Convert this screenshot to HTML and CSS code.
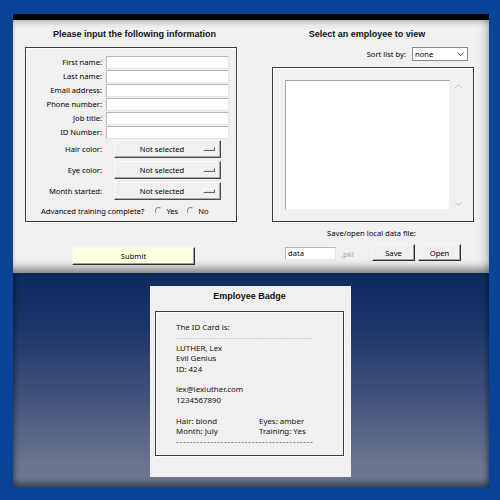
FILE: index.html
```html
<!DOCTYPE html>
<html>
<head>
<meta charset="utf-8">
<link rel="stylesheet" href="styles.css">
</head>
<body>
<div class="screen">
  <div class="titlebar"></div>
  <div class="app">
    <div class="col-left">
      <div class="heading heading-left">Please input the following information</div>
      <div class="groupbox form">
        <div class="grid">
          <label class="lbl">First name:</label><div class="entry"></div>
          <label class="lbl">Last name:</label><div class="entry"></div>
          <label class="lbl">Email address:</label><div class="entry"></div>
          <label class="lbl">Phone number:</label><div class="entry"></div>
          <label class="lbl">Job title:</label><div class="entry"></div>
          <label class="lbl">ID Number:</label><div class="entry"></div>
        </div>
        <div class="grid menus">
          <label class="lbl">Hair color:</label><div class="option"><span class="option-text">Not selected</span><span class="indicator"></span></div>
          <label class="lbl">Eye color:</label><div class="option"><span class="option-text">Not selected</span><span class="indicator"></span></div>
          <label class="lbl">Month started:</label><div class="option"><span class="option-text">Not selected</span><span class="indicator"></span></div>
        </div>
        <div class="radio-row">
          <span class="radio-label">Advanced training complete?</span>
          <span class="radio"><span class="dot"></span>Yes</span>
          <span class="radio"><span class="dot"></span>No</span>
        </div>
      </div>
      <div class="btn submit">Submit</div>
    </div>
    <div class="col-right">
      <div class="heading heading-right">Select an employee to view</div>
      <div class="sort-row">
        <span class="sort-label">Sort list by:</span>
        <div class="combo"><span>none</span>
          <svg class="chev" width="7" height="4" viewBox="0 0 7 4"><polyline points="0.5,0.5 3.5,3.5 6.5,0.5" fill="none" stroke="#555" stroke-width="1"/></svg>
        </div>
      </div>
      <div class="groupbox listframe">
        <div class="listbox"></div>
        <div class="scroll">
          <svg width="7" height="4" viewBox="0 0 7 4"><polyline points="0.5,3.5 3.5,0.5 6.5,3.5" fill="none" stroke="#bdbdbd" stroke-width="1"/></svg>
          <svg width="7" height="4" viewBox="0 0 7 4"><polyline points="0.5,0.5 3.5,3.5 6.5,0.5" fill="none" stroke="#bdbdbd" stroke-width="1"/></svg>
        </div>
      </div>
      <div class="save-label">Save/open local data file:</div>
      <div class="file-row">
        <div class="entry file-entry">data</div>
        <span class="ext">.pkl</span>
        <div class="btn gray save">Save</div>
        <div class="btn gray">Open</div>
      </div>
    </div>
  </div>
  <div class="desktop">
    <div class="badge">
      <div class="badge-title">Employee Badge</div>
      <div class="groupbox card">
        <div class="line">The ID Card is:</div>
        <div class="line dashes light">----------------------------------------</div>
        <div class="line">LUTHER, Lex</div>
        <div class="line">Evil Genius</div>
        <div class="line">ID: 424</div>
        <div class="line"></div>
        <div class="line">lex@lexluther.com</div>
        <div class="line">1234567890</div>
        <div class="line"></div>
        <div class="pair"><span>Hair: blond</span><span>Eyes: amber</span></div>
        <div class="pair"><span>Month: July</span><span>Training: Yes</span></div>
        <div class="line dashes">----------------------------------------</div>
      </div>
    </div>
  </div>
</div>
</body>
</html>
```
FILE: styles.css
```css
html, body {
  margin: 0;
  padding: 0;
}
body {
  width: 500px;
  height: 500px;
  background: #0a4499;
  font-family: "Noto Sans", "Liberation Sans", sans-serif;
  font-size: 7.6px;
  color: #000;
  overflow: hidden;
}
.screen {
  padding: 14px 11px 13px 13px;
  width: 476px;
}
.titlebar {
  height: 6px;
  background: #030303;
}
.app {
  height: 253px;
  background: #f0f0f0;
  box-shadow: inset 0 6px 6px -4px rgba(0,0,0,0.25),
              inset -9px 0 8px -6px rgba(0,0,0,0.22),
              inset 0 -10px 8px -5px rgba(0,0,0,0.45);
  display: flex;
  box-sizing: border-box;
}
.col-left {
  margin-left: 12px;
  width: 212px;
  display: flex;
  flex-direction: column;
}
.col-right {
  margin-left: 35px;
  width: 202px;
  display: flex;
  flex-direction: column;
}
.heading {
  font-family: "Liberation Sans", Arial, sans-serif;
  font-weight: bold;
  font-size: 9px;
  line-height: 14px;
  margin-top: 7px;
  color: #111;
  text-align: center;
  white-space: nowrap;
}
.heading-left {
  padding-left: 7px;
  margin-bottom: 6px;
}
.heading-right {
  padding-right: 12px;
}
.groupbox {
  border: 1px solid #3a3a3a;
  box-shadow: inset 1px 1px 0 #fcfcfc, 1px 1px 0 #fcfcfc;
}
.form {
  height: 175px;
  box-sizing: border-box;
  padding-top: 8px;
}
.grid {
  display: grid;
  grid-template-columns: 76px 123px;
  column-gap: 4px;
  row-gap: 1px;
}
.lbl {
  text-align: right;
  line-height: 13px;
  white-space: nowrap;
}
.entry {
  height: 13px;
  box-sizing: border-box;
  background: #fff;
  border: 1px solid;
  border-color: #b8b8b8 #e6e6e6 #e6e6e6 #b8b8b8;
}
.menus {
  margin-top: 1px;
  row-gap: 3px;
}
.menus .lbl {
  line-height: 18px;
}
.option {
  margin-left: 8px;
  width: 107px;
  height: 18px;
  box-sizing: border-box;
  border: 1px solid;
  border-color: #fafafa #4a4a4a #4a4a4a #fafafa;
  box-shadow: inset -1px -1px 0 #a8a8a8;
  display: flex;
  align-items: center;
}
.option-text {
  flex: 1;
  text-align: center;
  padding-left: 6px;
}
.indicator {
  width: 10px;
  height: 2px;
  margin-right: 5px;
  border: 1px solid;
  border-color: #fff #666 #666 #fff;
  background: #e4e4e4;
}
.radio-row {
  display: flex;
  align-items: center;
  height: 15px;
  margin-top: 3px;
  padding-left: 15px;
  white-space: nowrap;
}
.radio-label {
  margin-right: 11px;
}
.radio {
  display: flex;
  align-items: center;
  margin-right: 9px;
}
.dot {
  width: 5px;
  height: 5px;
  border-radius: 50%;
  border: 1px solid;
  border-color: #8a8a8a #f4f4f4 #f4f4f4 #8a8a8a;
  margin-right: 4px;
}
.btn {
  box-sizing: border-box;
  border: 1px solid;
  border-color: #f6f6f6 #2e2e2e #2e2e2e #f6f6f6;
  box-shadow: inset -1px -1px 0 #a0a0a0;
  display: flex;
  align-items: center;
  justify-content: center;
}
.submit {
  margin-top: 25px;
  margin-left: 47px;
  width: 123px;
  height: 18px;
  background: #ffffe0;
}
.sort-row {
  margin-top: 6px;
  display: flex;
  justify-content: flex-end;
  align-items: center;
  padding-right: 6px;
  height: 14px;
}
.sort-label {
  margin-right: 6px;
}
.combo {
  width: 56px;
  height: 14px;
  box-sizing: border-box;
  border: 1px solid #8a8a8a;
  background: #fff;
  display: flex;
  align-items: center;
  justify-content: space-between;
  padding: 0 3px 0 2px;
}
.chev {
  display: block;
}
.listframe {
  margin-top: 6px;
  height: 155px;
  box-sizing: border-box;
  padding: 12px 0 0 12px;
  display: flex;
}
.listbox {
  width: 165px;
  height: 130px;
  box-sizing: border-box;
  background: #fff;
  border: 1px solid;
  border-color: #a8a8a8 #f0f0f0 #f0f0f0 #a8a8a8;
}
.scroll {
  width: 16px;
  height: 130px;
  display: flex;
  flex-direction: column;
  justify-content: space-between;
  align-items: center;
  padding: 4px 0 4px;
  box-sizing: border-box;
}
.scroll svg {
  display: block;
}
.save-label {
  margin-top: 4px;
  line-height: 14px;
  text-align: center;
  padding-right: 3px;
}
.file-row {
  margin-top: 4px;
  display: flex;
  align-items: flex-start;
  padding-left: 13px;
}
.file-entry {
  margin-top: 3px;
  width: 51px;
  line-height: 11px;
  padding-left: 2px;
}
.ext {
  margin-top: 5px;
  margin-left: 5px;
  color: #a8a8a8;
  width: 31px;
}
.gray {
  width: 43px;
  height: 17px;
  background: #f0f0f0;
  margin-right: 3px;
}
.desktop {
  height: 214px;
  background: linear-gradient(#0c2a5f 0%, #1b3669 25%, #3e5079 55%, #6b7590 90%, #6f7990 100%);
  box-shadow: inset 5px 0 5px -3px rgba(0,0,0,0.35),
              inset -5px 0 5px -3px rgba(0,0,0,0.35),
              inset 0 -7px 6px -3px rgba(0,0,0,0.45);
  padding-top: 13px;
  box-sizing: border-box;
}
.badge {
  margin-left: 137px;
  width: 201px;
  height: 191px;
  background: #f0f0f0;
  box-sizing: border-box;
  padding: 3px 7px 0 5px;
}
.badge-title {
  font-family: "Liberation Sans", Arial, sans-serif;
  font-weight: bold;
  font-size: 9px;
  line-height: 14px;
  text-align: center;
  color: #111;
}
.card {
  margin-top: 8px;
  height: 145px;
  box-sizing: border-box;
  padding: 10px 0 0 20px;
  color: #111;
  font-size: 7.9px;
}
.line {
  height: 10.4px;
  line-height: 10.4px;
  white-space: nowrap;
}
.dashes {
  letter-spacing: 0.9px;
  color: #333;
}
.light {
  color: #b0b0b0;
}
.pair {
  display: grid;
  grid-template-columns: 83px auto;
  height: 10.4px;
  line-height: 10.4px;
  white-space: nowrap;
}
```
